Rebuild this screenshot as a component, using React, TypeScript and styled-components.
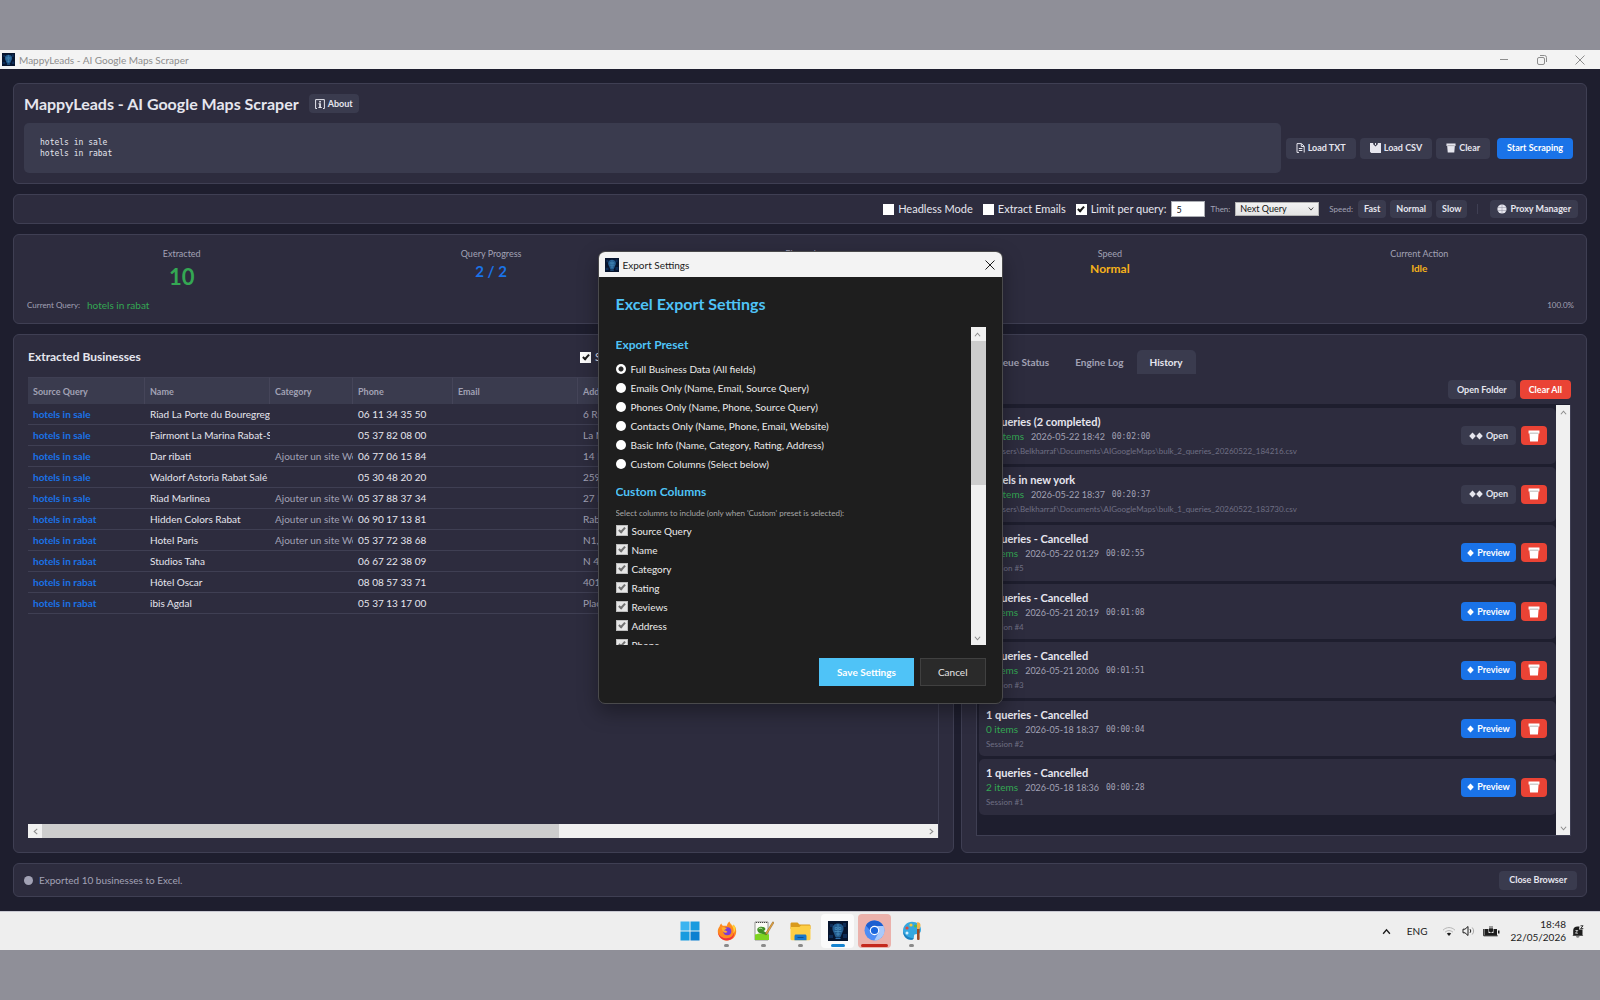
import React from "react";
import styled, { createGlobalStyle, css } from "styled-components";

const ui = `Lato, "Open Sans", "Liberation Sans", sans-serif`;
const mono = `"DejaVu Sans Mono", "Liberation Mono", monospace`;

const c = {
  bg: "#1e1e2e",
  card: "#2d2c3e",
  line: "#3f3f53",
  soft: "#3a3b4e",
  text: "#e6e6ee",
  muted: "#a2a2b5",
  faint: "#6f6f84",
  blue: "#1a73e8",
  green: "#34a853",
  amber: "#f5b21a",
  red: "#ea4335",
  accent: "#4fc3f7",
  dialog: "#1e1e1e",
};

const Global = createGlobalStyle`
  *, *::before, *::after { box-sizing: border-box; }
  body { margin: 0; background: #8f8f98; font-family: ${ui}; font-size: 9px; }
  button, input, select, textarea { font: inherit; color: inherit; margin: 0; }
  h1, h2, h3, p { margin: 0; }
`;

const Screen = styled.div`
  min-height: 100vh;
  padding: 50px 0;
  display: flex;
  flex-direction: column;
`;

const Window = styled.div`
  position: relative;
  flex: 1;
  display: flex;
  flex-direction: column;
  background: ${c.bg};
  color: ${c.text};
`;

const TitleBar = styled.header<{ $dialog?: boolean }>`
  display: flex;
  align-items: center;
  gap: 4px;
  height: ${(p) => (p.$dialog ? 25 : 19)}px;
  padding: 0 ${(p) => (p.$dialog ? 7 : 15)}px 0 ${(p) => (p.$dialog ? 6 : 2)}px;
  background: #f3f3f3;
  color: ${(p) => (p.$dialog ? "#1b1b1b" : "#8d8d8d")};
  font-size: 10px;
  line-height: 14px;
`;

const WindowControls = styled.div`
  display: flex;
  gap: 28px;
  margin-left: auto;
`;

const PlainButton = styled.button`
  display: flex;
  padding: 0;
  border: 0;
  background: none;
  color: inherit;
`;

const Content = styled.main`
  flex: 1;
  display: flex;
  flex-direction: column;
  gap: 10px;
  padding: 14px 13px;
`;

const Card = styled.section`
  background: ${c.card};
  border: 1px solid ${c.line};
  border-radius: 6px;
`;

const HeaderCard = styled(Card)`
  padding: 10px 13px 10px 10px;
`;

const TitleRow = styled.div`
  display: flex;
  align-items: center;
  gap: 10px;
  height: 19px;
  margin-bottom: 10px;
`;

const AppTitle = styled.h1`
  font-size: 16px;
  line-height: 19px;
  font-weight: 700;
`;

const QueryRow = styled.div`
  display: flex;
  align-items: center;
  gap: 5px;
`;

const QueryBox = styled.textarea`
  flex: 1;
  height: 50px;
  padding: 14px 16px;
  border: 0;
  border-radius: 5px;
  resize: none;
  outline: none;
  background: ${c.soft};
  color: ${c.text};
  font: 8px/11px ${mono};
`;

const Buttons = styled.div<{ $gap?: number }>`
  display: flex;
  align-items: center;
  gap: ${(p) => p.$gap ?? 4}px;
`;

const Button = styled.button<{ $tone?: "blue" | "red"; $h?: number; $pad?: number; $lead?: boolean; $min?: number }>`
  display: inline-flex;
  align-items: center;
  justify-content: center;
  gap: 3px;
  height: ${(p) => p.$h ?? 19}px;
  min-width: ${(p) => p.$min ?? 0}px;
  padding: 0 ${(p) => p.$pad ?? 9}px;
  margin-left: ${(p) => (p.$lead ? 3 : 0)}px;
  border: 0;
  border-radius: 4px;
  background: ${(p) => (p.$tone ? c[p.$tone] : c.soft)};
  color: ${(p) => (p.$tone ? "#ffffff" : c.text)};
  font-size: 9px;
  line-height: 12px;
  font-weight: 700;
  white-space: nowrap;
`;

const OptionsCard = styled(Card)`
  display: flex;
  align-items: center;
  justify-content: flex-end;
  height: 30px;
  padding: 0 8px;
`;

const tick = css`
  &:checked::after {
    content: "";
    width: 4px;
    height: 7px;
    margin-bottom: 2px;
    border: solid currentColor;
    border-width: 0 2px 2px 0;
    transform: rotate(42deg);
  }
`;

const CheckBox = styled.input.attrs({ type: "checkbox" })<{ $dim?: boolean }>`
  appearance: none;
  display: inline-flex;
  align-items: center;
  justify-content: center;
  flex: none;
  width: ${(p) => (p.$dim ? 12 : 11)}px;
  height: 11px;
  background: ${(p) => (p.$dim ? "#e6e6e6" : "#ffffff")};
  border: 1px solid ${(p) => (p.$dim ? "#bdbdbd" : "#ffffff")};
  color: ${(p) => (p.$dim ? "#707070" : "#1a1a1a")};
  ${tick}
`;

const CheckLabel = styled.label<{ $after?: number }>`
  display: flex;
  align-items: center;
  gap: 4px;
  margin-right: ${(p) => p.$after ?? 10}px;
  font-size: 11px;
  line-height: 14px;
  white-space: nowrap;
`;

const LimitInput = styled.input`
  width: 34px;
  height: 16px;
  padding: 0 5px;
  border: 1px solid #abadb3;
  border-radius: 0;
  background: #ffffff;
  color: #111111;
  font-size: 9px;
`;

const SmallLabel = styled.label`
  margin-right: 5px;
  color: ${c.muted};
  font-size: 8px;
`;

const SelectWrap = styled.span`
  position: relative;
  display: inline-flex;
  margin-right: 10px;
  color: #333333;
  svg {
    position: absolute;
    right: 5px;
    top: 4px;
    pointer-events: none;
  }
`;

const ThenSelect = styled.select`
  appearance: none;
  width: 84px;
  height: 14px;
  padding: 0 4px;
  border: 1px solid #b4b4b4;
  border-radius: 0;
  background: linear-gradient(#f2f2f2, #e4e4e4);
  color: #111111;
  font-size: 9px;
  line-height: 12px;
`;

const Divider = styled.span`
  width: 1px;
  height: 10px;
  margin: 0 12px 0 10px;
  background: ${c.line};
`;

const StatsCard = styled(Card)`
  display: flex;
  flex-direction: column;
  justify-content: space-between;
  height: 90px;
  padding: 13px 12px 12px 13px;
`;

const StatGrid = styled.div`
  display: grid;
  grid-template-columns: repeat(5, 1fr);
`;

const Stat = styled.div`
  display: flex;
  flex-direction: column;
  align-items: center;
`;

const StatLabel = styled.span`
  color: ${c.muted};
  font-size: 9px;
  line-height: 12px;
`;

const StatValue = styled.strong<{ $color: string; $size: number; $line: number }>`
  color: ${(p) => p.$color};
  font-size: ${(p) => p.$size}px;
  line-height: ${(p) => p.$line}px;
  font-weight: 700;
`;

const StatFoot = styled.div`
  display: flex;
  align-items: center;
  gap: 7px;
  color: ${c.muted};
  font-size: 8px;
  line-height: 12px;
  span:last-child { margin-left: auto; }
`;

const GreenText = styled.b`
  color: ${c.green};
  font-size: 10px;
  font-weight: 400;
`;

const Panels = styled.div`
  flex: 1;
  display: grid;
  grid-template-columns: minmax(0, 941fr) 7px minmax(0, 626fr);
  min-height: 0;
`;

const ResultsCard = styled(Card)`
  display: flex;
  flex-direction: column;
  padding: 0 14px 14px;
`;

const Splitter = styled.div`
  display: flex;
  align-items: center;
  justify-content: center;
`;

const ResultsHead = styled.div`
  display: flex;
  align-items: center;
  justify-content: space-between;
  height: 42px;
  padding-top: 2px;
`;

const PanelTitle = styled.h2`
  font-size: 12px;
  line-height: 14px;
  font-weight: 700;
`;

const ResultsTools = styled.div`
  display: flex;
  align-items: center;
  justify-content: space-between;
  width: 359px;
`;

const TableWrap = styled.div`
  flex: 1;
  display: flex;
  flex-direction: column;
  min-height: 0;
  overflow: hidden;
  border-right: 1px solid ${c.line};
`;

const TableScroll = styled.div`
  flex: 1;
  overflow: hidden;
`;

const Table = styled.table`
  table-layout: fixed;
  width: 1100px;
  border-collapse: separate;
  border-spacing: 0;
`;

const Th = styled.th<{ $w: number }>`
  width: ${(p) => p.$w}px;
  height: 27px;
  padding: 0 5px;
  border-top: 1px solid ${c.line};
  border-right: 1px solid #454559;
  background: ${c.soft};
  color: ${c.muted};
  font-size: 9px;
  font-weight: 700;
  text-align: left;
`;

const Td = styled.td<{ $tone?: "link" | "muted" }>`
  height: 21px;
  padding: 0 0 0 5px;
  border-bottom: 1px solid ${c.line};
  overflow: hidden;
  white-space: nowrap;
  font-size: 10px;
  line-height: 14px;
  font-weight: ${(p) => (p.$tone === "link" ? 700 : 400)};
  color: ${(p) => (p.$tone === "link" ? c.blue : p.$tone === "muted" ? c.muted : c.text)};
`;

const Track = styled.div<{ $across?: boolean; $size: number }>`
  flex: none;
  display: flex;
  flex-direction: ${(p) => (p.$across ? "row" : "column")};
  ${(p) => (p.$across ? "height" : "width")}: ${(p) => p.$size}px;
  background: #f0f0f0;
  color: #8c8c8c;
`;

const TrackButton = styled.button`
  flex: none;
  display: flex;
  align-items: center;
  justify-content: center;
  width: 14px;
  height: 14px;
  padding: 0;
  border: 0;
  background: none;
`;

const Thumb = styled.div<{ $share: number }>`
  flex: ${(p) => p.$share} 1 0;
  background: #cdcdcd;
`;

const Rest = styled.div<{ $share: number }>`
  flex: ${(p) => p.$share} 1 0;
`;

const SideCard = styled(Card)`
  display: flex;
  flex-direction: column;
  padding: 15px 15px 16px 14px;
`;

const Tabs = styled.div`
  display: flex;
  margin-bottom: 6px;
`;

const Tab = styled.button<{ $active?: boolean }>`
  height: 24px;
  padding: 0 13px;
  border: 0;
  border-radius: 5px 5px 0 0;
  background: ${(p) => (p.$active ? c.soft : "transparent")};
  color: ${(p) => (p.$active ? c.text : c.muted)};
  font-size: 10px;
  font-weight: 700;
`;

const SideActions = styled(Buttons)`
  justify-content: flex-end;
  margin-bottom: 5px;
`;

const HistoryBox = styled.div`
  flex: 1;
  display: flex;
  border: 1px solid ${c.line};
  border-top-color: ${c.bg};
  background: ${c.bg};
`;

const HistoryList = styled.ul`
  flex: 1;
  display: flex;
  flex-direction: column;
  gap: 3px;
  margin: 0;
  padding: 3px 0 20px 2px;
  list-style: none;
`;

const HistoryItem = styled.li`
  flex: 1;
  display: flex;
  align-items: center;
  justify-content: space-between;
  padding: 0 9px 0 7px;
  border-radius: 5px;
  background: ${c.card};
`;

const ItemTitle = styled.h3`
  font-size: 11px;
  line-height: 15px;
  font-weight: 700;
`;

const ItemMeta = styled.div`
  display: flex;
  gap: 7px;
  color: ${c.muted};
  font-size: 9px;
  line-height: 15px;
  code { font: 8px/15px ${mono}; }
`;

const ItemPath = styled.p`
  color: ${c.faint};
  font-size: 8px;
  line-height: 14px;
`;

const StatusCard = styled(Card)`
  display: flex;
  align-items: center;
  gap: 6px;
  height: 34px;
  padding: 0 9px 0 10px;
  color: ${c.muted};
  font-size: 10px;
`;

const Dot = styled.span`
  width: 9px;
  height: 9px;
  border-radius: 50%;
  background: ${c.muted};
`;

const StatusText = styled.span`
  flex: 1;
`;

const Overlay = styled.div`
  position: absolute;
  inset: 0;
  display: grid;
  place-items: center;
  padding-bottom: 6px;
`;

const Dialog = styled.div`
  display: flex;
  flex-direction: column;
  width: 405px;
  height: 453px;
  overflow: hidden;
  border: 1px solid #4a4a4c;
  border-radius: 7px;
  background: ${c.dialog};
  box-shadow: 0 8px 20px rgba(0, 0, 0, 0.35);
`;

const DialogBody = styled.form`
  flex: 1;
  display: flex;
  flex-direction: column;
  min-height: 0;
  padding: 16px 16px 17px 17px;
`;

const DialogTitle = styled.h2`
  height: 34px;
  color: ${c.accent};
  font-size: 16px;
  line-height: 22px;
  font-weight: 700;
`;

const DialogScroll = styled.div`
  flex: 1;
  display: flex;
  min-height: 0;
`;

const Fields = styled.div`
  flex: 1;
  display: flex;
  flex-direction: column;
  gap: 11px;
  padding-top: 10px;
  overflow: hidden;
`;

const FieldSet = styled.fieldset`
  margin: 0;
  padding: 0;
  border: 0;
`;

const Legend = styled.legend`
  padding: 0 0 6px;
  color: ${c.accent};
  font-size: 12px;
  line-height: 16px;
  font-weight: 700;
`;

const Choice = styled.label<{ $gap: number }>`
  display: flex;
  align-items: center;
  gap: ${(p) => p.$gap}px;
  height: 19px;
  color: #ececec;
  font-size: 10px;
  line-height: 14px;
`;

const Radio = styled.input.attrs({ type: "radio" })`
  appearance: none;
  flex: none;
  width: 10px;
  height: 10px;
  border-radius: 50%;
  background: #ffffff;
  &:checked { background: radial-gradient(circle, #2a2a2a 0 2px, #ffffff 3px); }
`;

const Hint = styled.p`
  height: 15px;
  color: #a8a8a8;
  font-size: 8px;
  line-height: 15px;
`;

const DialogActions = styled.div`
  display: flex;
  justify-content: flex-end;
  gap: 6px;
  margin-top: 13px;
`;

const DialogButton = styled.button<{ $primary?: boolean }>`
  height: 28px;
  padding: 0 17px;
  border: 1px solid ${(p) => (p.$primary ? c.accent : "#404040")};
  background: ${(p) => (p.$primary ? c.accent : "#2a2a2a")};
  color: ${(p) => (p.$primary ? "#ffffff" : "#e6e6e6")};
  font-size: 10px;
  font-weight: ${(p) => (p.$primary ? 700 : 400)};
`;

const TaskBar = styled.footer`
  display: grid;
  grid-template-columns: 1fr auto 1fr;
  height: 39px;
  border-top: 1px solid #c9c9d2;
  background: #eeeeee;
  color: #1c1c1c;
`;

const TaskApps = styled.nav`
  grid-column: 2;
  display: flex;
  gap: 4px;
  padding: 2px 0 0 1px;
`;

const TaskApp = styled.button<{ $bg?: string; $bar?: string; $barW?: number }>`
  display: flex;
  flex-direction: column;
  align-items: center;
  justify-content: flex-end;
  gap: 3px;
  width: 33px;
  height: 34px;
  padding: 0 0 1px;
  border: 0;
  border-radius: 4px;
  background: ${(p) => p.$bg ?? "transparent"};
  &::after {
    content: "";
    width: ${(p) => p.$barW ?? 5}px;
    height: 3px;
    border-radius: 2px;
    background: ${(p) => p.$bar ?? "#8a8a8a"};
  }
`;

const Tray = styled.div`
  display: flex;
  align-items: center;
  justify-content: flex-end;
  padding-right: 16px;
  font-size: 10px;
  line-height: 13px;
`;

const TrayIcons = styled.div`
  display: flex;
  align-items: center;
  gap: 6px;
  margin: 0 11px 0 14px;
`;

const Lang = styled.span`
  margin-left: 16px;
`;

const Clock = styled.time`
  margin-right: 6px;
  text-align: right;
`;

/* ---------- drawings ---------- */

const AppLogo = ({ size }: { size: number }) => (
  <svg width={size} height={size} viewBox="0 0 20 20" aria-hidden="true">
    <rect width="20" height="20" fill="#06142e" />
    <path d="M2 3h3v3H2zM15 2h3v4h-3zM1 14h4v3H1zM15 13h4v4h-4z" fill="#0d2c57" />
    <path d="M10 2.500c3.600 0 5.600 2.200 5.600 5 0 2-1 3.400-1.600 4.800-.5 1.200-.8 3-2 4.200h-4c-1.200-1.200-1.500-3-2-4.200C5.400 10.900 4.400 9.500 4.400 7.500c0-2.800 2-5 5.600-5z" fill="#235b8e" />
    <path d="M7.200 6.500h2v2h-2zM10.800 6.500h2v2h-2zM10 3v12M6.500 10.500h7M8 13h4" stroke="#4f97c4" strokeWidth=".7" fill="none" />
    <path d="M7.500 17.500h5" stroke="#2f6ea8" />
  </svg>
);

const Close = ({ size }: { size: number }) => (
  <svg width={size} height={size} viewBox="0 0 10 10" stroke="currentColor" fill="none" aria-hidden="true">
    <path d="M.5.5l9 9M9.500.5l-9 9" />
  </svg>
);

const Chevron = ({ dir, size = 7 }: { dir: "up" | "down" | "left" | "right"; size?: number }) => {
  const d = { up: "M1 6l3-3.500L7 6", down: "M1 2l3 3.500L7 2", left: "M6 1L2.500 4 6 7", right: "M2 1l3.500 3L2 7" }[dir];
  return (
    <svg width={size} height={size} viewBox="0 0 8 8" fill="none" stroke="currentColor" strokeWidth="1.2" aria-hidden="true">
      <path d={d} />
    </svg>
  );
};

const InfoIcon = () => (
  <svg width="10" height="10" viewBox="0 0 10 10" aria-hidden="true">
    <path d="M2 9.500H.6V.6h8.800v8.900H8" fill="none" stroke="currentColor" strokeWidth="1" />
    <path d="M4.200 1.900h1.700v1.500H4.200zM3.500 4.200h2.400V8h.9v1H3.400V8h.8V5.200h-.7z" fill="currentColor" />
  </svg>
);

const FileIcon = () => (
  <svg width="9" height="10" viewBox="0 0 9 10" fill="none" stroke="currentColor" aria-hidden="true">
    <path d="M1 9.500V.6h4.500L8.200 3.300v6.200M5.300.8v2.700H8M2.800 5.500h3.600M2.800 7.500h3.600M1 9.400h2" />
  </svg>
);

const SaveIcon = () => (
  <svg width="11" height="10" viewBox="0 0 11 10" aria-hidden="true">
    <path fillRule="evenodd" d="M0 0h3.200v1.300l2.300 2.300 2.300-2.300V0H11v10H1.200L0 8.800zM5 0h1v2H5z" fill="currentColor" />
  </svg>
);

const BinIcon = ({ size = 10 }: { size?: number }) => (
  <svg width={size} height={size} viewBox="0 0 11 11" aria-hidden="true">
    <path d="M.5.5h10v2.800H9.700l-.6 7.200H1.900l-.6-7.200H.5z" fill="currentColor" />
    <path d="M1.500 2.900h8" stroke="#00000055" strokeWidth=".8" />
  </svg>
);

const GlobeIcon = () => (
  <svg width="10" height="10" viewBox="0 0 10 10" aria-hidden="true">
    <circle cx="5" cy="5" r="4.600" fill="currentColor" />
    <path d="M.8 3.500h8.400M.8 6.500h8.400M5 .6v8.800" stroke="#8d8d9c" strokeWidth=".5" />
  </svg>
);

const Diamonds = ({ n }: { n: number }) => (
  <svg width={n * 7} height="8" viewBox={`0 0 ${n * 7} 8`} fill="currentColor" aria-hidden="true">
    {Array.from({ length: n }, (_, i) => (
      <path key={i} d={`M${i * 7 + 3.5} .5l3.300 3.500-3.300 3.500L${i * 7 + 0.2} 4z`} />
    ))}
  </svg>
);

const WindowsIcon = () => (
  <svg width="20" height="20" viewBox="0 0 20 20" aria-hidden="true">
    <path d="M.5.5h9v9h-9z" fill="#3bb4f0" />
    <path d="M10.500.5h9v9h-9zM.5 10.500h9v9h-9z" fill="#189bdf" />
    <path d="M10.500 10.500h9v9h-9z" fill="#0c7fd0" />
  </svg>
);

const FirefoxIcon = () => (
  <svg width="20" height="20" viewBox="0 0 20 20" aria-hidden="true">
    <path d="M10 19.500c5.200 0 9.200-4 9.200-9.300 0-3-1.200-5.200-3-6.700.2 1 .2 1.600 0 2.200C14.800 3.500 12.800 3 12.600.5 10.500 1.700 10 3.600 10 4.700 7.500 4.500 6.500 5 5.500 4.500 4.700 4 4.600 3.200 4.600 2.500 3 3.600 2.800 4.700 2.600 5.600 1.500 7 .8 8.400.8 10.400c0 5.100 4 9.100 9.200 9.100z" fill="#ff8a1f" />
    <path d="M12.600.5c0 3.200 4 4.700 4 9 0 1-.2 2-.7 2.800 2-1 3-3.600 2.300-6.300-.7-1.300-1.300-1.900-2-2.500.2 1 .2 1.600 0 2.200C14.800 3.500 12.800 3 12.600.5z" fill="#ffd53a" />
    <path d="M1 11c1 4 4.500 6.300 8.500 6.300 4.500 0 7.200-3 7.500-6 .8 4.500-2.500 8.200-7 8.200-5 0-8.800-3.700-9-8.500z" fill="#f0303f" />
    <circle cx="10.300" cy="10.200" r="4" fill="#7c3bd6" />
    <path d="M4.500 6.500c2-.6 4 0 5.500 1.500-1.500 0-2.500.6-3 1.500 1.500-.2 3 .5 3.500 1.500-2 1.500-5 .8-6-4.500z" fill="#ffae2e" />
  </svg>
);

const NotepadIcon = () => (
  <svg width="20" height="20" viewBox="0 0 20 20" aria-hidden="true">
    <path d="M1 1h13v18H1z" fill="#fbfbf6" stroke="#6f6f6f" strokeWidth=".7" />
    <path d="M2 1.500h11" stroke="#444" strokeWidth="1.200" strokeDasharray="1 1" />
    <path d="M1 13.500c3-1.500 9-1.500 14 0V19H1z" fill="#7ed321" />
    <path d="M3.500 7.500c1-2 5-2.500 7-1 1.500 1.200 1 3-1 3.500l4 2.500-1 1.500-5.500-1.500C4.500 12 2.500 10 3.500 7.500z" fill="#3f8f25" />
    <path d="M4.800 7.800c1-.8 2.600-.8 3.600.2" stroke="#d8f5c0" fill="none" />
    <path d="M18.800.8l-7 11-.3 2 1.800-1.200 6.700-11z" fill="#f0a93a" stroke="#7a5520" strokeWidth=".5" />
  </svg>
);

const FolderIcon = () => (
  <svg width="21" height="19" viewBox="0 0 21 19" aria-hidden="true">
    <path d="M.5 2c0-1 .5-1.500 1.500-1.500h5.500l2 2H19c1 0 1.500.5 1.500 1.500v3H.5z" fill="#d99a1c" />
    <path d="M.5 5h8.800l1.700-1.600h8c1 0 1.500.4 1.500 1.400V17c0 .7-.5 1.200-1.200 1.200H1.700C1 18.200.5 17.700.5 17z" fill="#fdce45" />
    <path d="M4.500 18.200V14c0-.9.6-1.500 1.500-1.500h9c.9 0 1.500.6 1.500 1.500v4.200z" fill="#1877c9" />
    <path d="M7.500 15.500h6" stroke="#0d4f91" />
  </svg>
);

const ChromiumIcon = () => (
  <svg width="21" height="21" viewBox="0 0 21 21" aria-hidden="true">
    <circle cx="10.500" cy="10.500" r="10" fill="#4d8df5" />
    <path d="M1.800 5.500A10 10 0 0 1 19.400 6H10.500c-2.500 0-4.400 1.800-4.600 4z" fill="#1c5fd0" />
    <path d="M19.400 6a10 10 0 0 1-9.200 14.500l4.200-7.600c.9-1.900.6-4.700-1.900-6.900z" fill="#a9c9fb" />
    <circle cx="10.500" cy="10.500" r="4.700" fill="#ffffff" />
    <circle cx="10.500" cy="10.500" r="3.600" fill="#1a66dc" />
  </svg>
);

const PaintIcon = () => (
  <svg width="20" height="20" viewBox="0 0 20 20" aria-hidden="true">
    <path d="M10 .8c5 0 9 3.200 9 8 0 3-2 4.200-4 4.200-2.500 0-3 .8-3 2.200 0 1.600-.5 3.600-3 3.600-4.600 0-8-4-8-9C1 4.800 5 .8 10 .8z" fill="#35a7e0" />
    <path d="M1 10c0 5 3.400 8.800 8 8.800 1.500 0 2.300-.7 2.700-1.600C6 17 2.500 14 1 10z" fill="#1b7fc0" />
    <circle cx="5" cy="7" r="1.600" fill="#e3493b" />
    <circle cx="9" cy="4" r="1.600" fill="#f5c73d" />
    <circle cx="13.500" cy="5" r="1.500" fill="#58b947" />
    <circle cx="5" cy="12" r="1.500" fill="#d5f0ff" />
    <path d="M15 1.500c1.500-.8 3.500.5 3.500 2.500 0 2-1 3-1 4h-2.500z" fill="#f2b34a" />
    <path d="M15 8h2.600v10c0 1.300-2.600 1.300-2.600 0z" fill="#9c4a26" />
  </svg>
);

const WifiIcon = () => (
  <svg width="14" height="11" viewBox="0 0 14 11" fill="none" aria-hidden="true">
    <path d="M1 4.200c3.500-3.500 8.500-3.500 12 0M3 6.300c2.300-2.300 5.700-2.300 8 0" stroke="#b5b5b5" />
    <path d="M4.800 7.600c1.300-1.100 3.100-1.100 4.400 0L7 10z" fill="#1c1c1c" />
  </svg>
);

const SpeakerIcon = () => (
  <svg width="14" height="12" viewBox="0 0 14 12" fill="none" stroke="#1c1c1c" aria-hidden="true">
    <path d="M1 4.200h2L6 1.500v9L3 7.800H1z" />
    <path d="M8 4.200c.9 1 .9 2.600 0 3.600" />
    <path d="M10.200 2.500c1.900 2 1.900 5 0 7" stroke="#aaaaaa" />
  </svg>
);

const BatteryIcon = () => (
  <svg width="18" height="12" viewBox="0 0 18 12" aria-hidden="true">
    <path d="M2.500 4h4v4h5V4H15v6.500H2.500zM16 5.500h1.500v3H16z" fill="#1c1c1c" />
    <path d="M7 3.500h4v2.200c0 1-.8 1.500-2 1.500s-2-.5-2-1.500zM7.600 1h.8v3h-.8zM9.600 1h.8v3h-.8zM8.700 7h.7v2h-.7z" fill="#1c1c1c" />
    <path d="M1.700 4v6.800h14" stroke="#1c1c1c" fill="none" />
  </svg>
);

const BellIcon = () => (
  <svg width="12" height="13" viewBox="0 0 12 13" aria-hidden="true">
    <path d="M1.200 10V5.500C1.200 3 3 1.500 5.500 1.500h2L7 4.500h3.500V10l.8.8H.4z" fill="#1c1c1c" />
    <path d="M3.500 5.500h2.200L3.500 8.200h2.400" stroke="#eeeeee" strokeWidth=".8" fill="none" />
    <path d="M8.500.8h2.600L8.600 3.600h2.700" stroke="#1c1c1c" strokeWidth=".9" fill="none" />
    <path d="M4 11.500h3.500c-.3 1.200-3.200 1.200-3.500 0z" fill="#1c1c1c" />
  </svg>
);

const Grip = () => (
  <svg width="4" height="12" viewBox="0 0 4 12" fill="#11111a" aria-hidden="true">
    <path d="M0 0h1v1H0zM2 2h1v1H2zM0 4h1v1H0zM2 6h1v1H2zM0 8h1v1H0z" />
  </svg>
);

/* ---------- data ---------- */

const columns: [string, number][] = [
  ["Source Query", 117],
  ["Name", 125],
  ["Category", 83],
  ["Phone", 100],
  ["Email", 125],
  ["Address", 250],
  ["Website", 300],
];

const site = "Ajouter un site Web";
const rows = [
  ["hotels in sale", "Riad La Porte du Bouregreg", "", "06 11 34 35 50", "", "6 Rue, Salé"],
  ["hotels in sale", "Fairmont La Marina Rabat-Salé", "", "05 37 82 08 00", "", "La Marina, Salé"],
  ["hotels in sale", "Dar ribati", site, "06 77 06 15 84", "", "14 Rue, Salé"],
  ["hotels in sale", "Waldorf Astoria Rabat Salé", "", "05 30 48 20 20", "", "259 Avenue, Salé"],
  ["hotels in sale", "Riad Marlinea", site, "05 37 88 37 34", "", "27 Rue, Salé"],
  ["hotels in rabat", "Hidden Colors Rabat", site, "06 90 17 13 81", "", "Rabat"],
  ["hotels in rabat", "Hotel Paris", site, "05 37 72 38 68", "", "N1, Rabat"],
  ["hotels in rabat", "Studios Taha", "", "06 67 22 38 09", "", "N 4, Rabat"],
  ["hotels in rabat", "Hôtel Oscar", "", "08 08 57 33 71", "", "401 Avenue, Rabat"],
  ["hotels in rabat", "ibis Agdal", "", "05 37 13 17 00", "", "Place, Rabat"],
];

const docs = "C:\\Users\\Belkharraf\\Documents\\AIGoogleMaps\\";
const history = [
  { title: "2 queries (2 completed)", items: "10 items", date: "2026-05-22 18:42", took: "00:02:00", path: docs + "bulk_2_queries_20260522_184216.csv", file: true },
  { title: "hotels in new york", items: "20 items", date: "2026-05-22 18:37", took: "00:20:37", path: docs + "bulk_1_queries_20260522_183730.csv", file: true },
  { title: "1 queries - Cancelled", items: "0 items", date: "2026-05-22 01:29", took: "00:02:55", path: "Session #5" },
  { title: "1 queries - Cancelled", items: "0 items", date: "2026-05-21 20:19", took: "00:01:08", path: "Session #4" },
  { title: "1 queries - Cancelled", items: "0 items", date: "2026-05-21 20:06", took: "00:01:51", path: "Session #3" },
  { title: "1 queries - Cancelled", items: "0 items", date: "2026-05-18 18:37", took: "00:00:04", path: "Session #2" },
  { title: "1 queries - Cancelled", items: "2 items", date: "2026-05-18 18:36", took: "00:00:28", path: "Session #1" },
];

const presets = [
  "Full Business Data (All fields)",
  "Emails Only (Name, Email, Source Query)",
  "Phones Only (Name, Phone, Source Query)",
  "Contacts Only (Name, Phone, Email, Website)",
  "Basic Info (Name, Category, Rating, Address)",
  "Custom Columns (Select below)",
];

const customColumns = ["Source Query", "Name", "Category", "Rating", "Reviews", "Address", "Phone"];

const stats = [
  { label: "Extracted", value: "10", color: c.green, size: 22, line: 34 },
  { label: "Query Progress", value: "2 / 2", color: c.blue, size: 15, line: 22 },
  { label: "Elapsed", value: "00:02:00", color: c.text, size: 15, line: 22 },
  { label: "Speed", value: "Normal", color: c.amber, size: 12, line: 18 },
  { label: "Current Action", value: "Idle", color: c.amber, size: 10, line: 16 },
];

const ScrollTrack = ({ across, size, thumb, rest }: { across?: boolean; size: number; thumb: number; rest: number }) => (
  <Track $across={across} $size={size}>
    <TrackButton type="button" aria-label={across ? "Scroll left" : "Scroll up"}>
      <Chevron dir={across ? "left" : "up"} />
    </TrackButton>
    <Thumb $share={thumb} />
    <Rest $share={rest} />
    <TrackButton type="button" aria-label={across ? "Scroll right" : "Scroll down"}>
      <Chevron dir={across ? "right" : "down"} />
    </TrackButton>
  </Track>
);

const ExportDialog = () => (
  <Overlay>
    <Dialog role="dialog" aria-label="Export Settings">
      <TitleBar $dialog>
        <AppLogo size={14} />
        <span>Export Settings</span>
        <WindowControls>
          <PlainButton type="button" aria-label="Close dialog">
            <Close size={10} />
          </PlainButton>
        </WindowControls>
      </TitleBar>
      <DialogBody onSubmit={(e) => e.preventDefault()}>
        <DialogTitle>Excel Export Settings</DialogTitle>
        <DialogScroll>
          <Fields>
            <FieldSet>
              <Legend>Export Preset</Legend>
              {presets.map((p, i) => (
                <Choice key={p} $gap={5}>
                  <Radio name="preset" defaultChecked={i === 0} />
                  {p}
                </Choice>
              ))}
            </FieldSet>
            <FieldSet>
              <Legend>Custom Columns</Legend>
              <Hint>Select columns to include (only when 'Custom' preset is selected):</Hint>
              {customColumns.map((p) => (
                <Choice key={p} $gap={4}>
                  <CheckBox $dim defaultChecked />
                  {p}
                </Choice>
              ))}
            </FieldSet>
          </Fields>
          <ScrollTrack size={15} thumb={144} rest={146} />
        </DialogScroll>
        <DialogActions>
          <DialogButton type="submit" $primary>Save Settings</DialogButton>
          <DialogButton type="button">Cancel</DialogButton>
        </DialogActions>
      </DialogBody>
    </Dialog>
  </Overlay>
);

export default function App() {
  return (
    <Screen>
      <Global />
      <Window>
        <TitleBar>
          <AppLogo size={13} />
          <span>MappyLeads - AI Google Maps Scraper</span>
          <WindowControls>
            <PlainButton type="button" aria-label="Minimize">
              <svg width="10" height="10" viewBox="0 0 10 10" stroke="currentColor"><path d="M1 4.500h8" /></svg>
            </PlainButton>
            <PlainButton type="button" aria-label="Restore">
              <svg width="10" height="10" viewBox="0 0 10 10" fill="none" stroke="currentColor">
                <rect x=".5" y="2.500" width="7" height="7" rx="1.500" />
                <path d="M3 .5h4.500a2 2 0 0 1 2 2V7" />
              </svg>
            </PlainButton>
            <PlainButton type="button" aria-label="Close">
              <Close size={10} />
            </PlainButton>
          </WindowControls>
        </TitleBar>

        <Content>
          <HeaderCard>
            <TitleRow>
              <AppTitle>MappyLeads - AI Google Maps Scraper</AppTitle>
              <Button type="button" $pad={6}><InfoIcon />About</Button>
            </TitleRow>
            <QueryRow>
              <QueryBox aria-label="Search queries" spellCheck={false} defaultValue={"hotels in sale\nhotels in rabat"} />
              <Buttons>
                <Button type="button" $h={21} $pad={10}><FileIcon />Load TXT</Button>
                <Button type="button" $h={21} $pad={10}><SaveIcon />Load CSV</Button>
                <Button type="button" $h={21} $pad={10}><BinIcon />Clear</Button>
                <Button type="button" $h={21} $pad={10} $tone="blue" $lead>Start Scraping</Button>
              </Buttons>
            </QueryRow>
          </HeaderCard>

          <OptionsCard>
            <CheckLabel><CheckBox />Headless Mode</CheckLabel>
            <CheckLabel><CheckBox />Extract Emails</CheckLabel>
            <CheckLabel as="div" $after={6}>
              <CheckBox id="limit-on" defaultChecked />
              <label htmlFor="limit-on">Limit per query:</label>
              <LimitInput aria-label="Limit per query" defaultValue="5" />
            </CheckLabel>
            <SmallLabel htmlFor="then">Then:</SmallLabel>
            <SelectWrap>
              <ThenSelect id="then" defaultValue="Next Query">
                <option>Next Query</option>
              </ThenSelect>
              <Chevron dir="down" size={6} />
            </SelectWrap>
            <SmallLabel as="span">Speed:</SmallLabel>
            <Buttons>
              <Button type="button" $h={18} $pad={6}>Fast</Button>
              <Button type="button" $h={18} $pad={6}>Normal</Button>
              <Button type="button" $h={18} $pad={6}>Slow</Button>
            </Buttons>
            <Divider />
            <Button type="button" $h={18} $pad={7}><GlobeIcon />Proxy Manager</Button>
          </OptionsCard>

          <StatsCard>
            <StatGrid>
              {stats.map((s) => (
                <Stat key={s.label}>
                  <StatLabel>{s.label}</StatLabel>
                  <StatValue $color={s.color} $size={s.size} $line={s.line}>{s.value}</StatValue>
                </Stat>
              ))}
            </StatGrid>
            <StatFoot>
              <span>Current Query:</span>
              <GreenText>hotels in rabat</GreenText>
              <span>100.0%</span>
            </StatFoot>
          </StatsCard>

          <Panels>
            <ResultsCard>
              <ResultsHead>
                <PanelTitle>Extracted Businesses</PanelTitle>
                <ResultsTools>
                  <CheckLabel><CheckBox defaultChecked />Select All</CheckLabel>
                  <Button type="button">Export Settings</Button>
                </ResultsTools>
              </ResultsHead>
              <TableWrap>
                <TableScroll>
                  <Table>
                    <thead>
                      <tr>{columns.map(([name, w]) => <Th key={name} $w={w}>{name}</Th>)}</tr>
                    </thead>
                    <tbody>
                      {rows.map((r) => (
                        <tr key={r[3]}>
                          <Td $tone="link">{r[0]}</Td>
                          <Td>{r[1]}</Td>
                          <Td $tone="muted">{r[2]}</Td>
                          <Td>{r[3]}</Td>
                          <Td>{r[4]}</Td>
                          <Td $tone="muted">{r[5]}</Td>
                          <Td />
                        </tr>
                      ))}
                    </tbody>
                  </Table>
                </TableScroll>
                <ScrollTrack across size={14} thumb={517} rest={365} />
              </TableWrap>
            </ResultsCard>

            <Splitter><Grip /></Splitter>

            <SideCard>
              <Tabs>
                <Tab type="button">Queue Status</Tab>
                <Tab type="button">Engine Log</Tab>
                <Tab type="button" $active>History</Tab>
              </Tabs>
              <SideActions>
                <Button type="button">Open Folder</Button>
                <Button type="button" $tone="red">Clear All</Button>
              </SideActions>
              <HistoryBox>
                <HistoryList>
                  {history.map((h, i) => (
                    <HistoryItem key={i}>
                      <div>
                        <ItemTitle>{h.title}</ItemTitle>
                        <ItemMeta>
                          <GreenText>{h.items}</GreenText>
                          <span>{h.date}</span>
                          <code>{h.took}</code>
                        </ItemMeta>
                        <ItemPath>{h.path}</ItemPath>
                      </div>
                      <Buttons $gap={5}>
                        {h.file ? (
                          <Button type="button" $min={55} $pad={6}><Diamonds n={2} />Open</Button>
                        ) : (
                          <Button type="button" $min={55} $pad={6} $tone="blue"><Diamonds n={1} />Preview</Button>
                        )}
                        <Button type="button" $tone="red" $pad={7} aria-label="Delete"><BinIcon size={12} /></Button>
                      </Buttons>
                    </HistoryItem>
                  ))}
                </HistoryList>
                <ScrollTrack size={14} thumb={0} rest={1} />
              </HistoryBox>
            </SideCard>
          </Panels>

          <StatusCard>
            <Dot />
            <StatusText>Exported 10 businesses to Excel.</StatusText>
            <Button type="button" $pad={10}>Close Browser</Button>
          </StatusCard>
        </Content>

        <ExportDialog />
      </Window>

      <TaskBar>
        <TaskApps aria-label="Taskbar">
          <TaskApp aria-label="Start" $bar="transparent"><WindowsIcon /></TaskApp>
          <TaskApp aria-label="Firefox"><FirefoxIcon /></TaskApp>
          <TaskApp aria-label="Notepad++"><NotepadIcon /></TaskApp>
          <TaskApp aria-label="File Explorer"><FolderIcon /></TaskApp>
          <TaskApp aria-label="MappyLeads" $bg="#fbfbfb" $bar="#1583d0" $barW={14}><AppLogo size={20} /></TaskApp>
          <TaskApp aria-label="Chromium" $bg="#ebb1ab" $bar="#c4281c" $barW={27}><ChromiumIcon /></TaskApp>
          <TaskApp aria-label="Paint"><PaintIcon /></TaskApp>
        </TaskApps>
        <Tray>
          <PlainButton type="button" aria-label="Show hidden icons"><Chevron dir="up" size={9} /></PlainButton>
          <Lang>ENG</Lang>
          <TrayIcons>
            <WifiIcon />
            <SpeakerIcon />
            <BatteryIcon />
          </TrayIcons>
          <Clock>18:48<br />22/05/2026</Clock>
          <BellIcon />
        </Tray>
      </TaskBar>
    </Screen>
  );
}
